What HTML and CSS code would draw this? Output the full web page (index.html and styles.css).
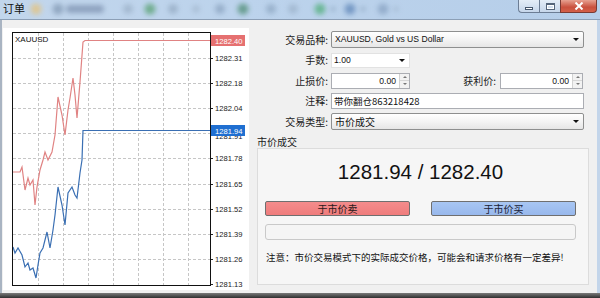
FILE: index.html
```html
<!DOCTYPE html>
<html>
<head>
<meta charset="utf-8">
<title>订单</title>
<link rel="stylesheet" href="styles.css">
</head>
<body>
<div class="window">
  <div class="titlebar">
    <span class="title">订单</span>
    <svg class="toolbar-blur" width="390" height="19" viewBox="22 0 390 19">
      <defs><filter id="b" x="-60%" y="-60%" width="220%" height="220%"><feGaussianBlur stdDeviation="2.4"/></filter></defs>
      <g filter="url(#b)" opacity="0.75">
        <circle cx="33" cy="9" r="5.5" fill="#e6c27a"/>
        <circle cx="55" cy="9" r="5.5" fill="#8299b4"/>
        <rect x="63" y="5" width="38" height="8" rx="4" fill="#7e93b1"/>
        <circle cx="125" cy="9" r="5" fill="#9cb1c8"/>
        <circle cx="147" cy="9" r="5.5" fill="#56a070"/>
        <circle cx="170" cy="9" r="5" fill="#94aac2"/>
        <circle cx="193" cy="9" r="4" fill="#a6bad0"/>
        <circle cx="217" cy="9" r="5" fill="#8aa3bf"/>
        <circle cx="240" cy="9" r="5.5" fill="#4d8c72"/>
        <circle cx="268" cy="9" r="5" fill="#8ea7c2"/>
        <circle cx="290" cy="9" r="5" fill="#9db3cb"/>
        <circle cx="317" cy="9" r="5.5" fill="#4fae78"/>
        <circle cx="330" cy="9" r="2.5" fill="#8ea6c0"/>
        <circle cx="347" cy="9" r="5.5" fill="#5f86b8"/>
        <circle cx="360" cy="9" r="2.5" fill="#8ea6c0"/>
        <circle cx="380" cy="9" r="5.5" fill="#88a2c2"/>
        <circle cx="393" cy="9" r="2.5" fill="#9fb4cc"/>
      </g>
    </svg>
    <div class="caption-buttons">
      <div class="cb cb-min"><span class="min-bar"></span></div>
      <div class="cb cb-max"><span class="max-box"></span></div>
      <div class="cb cb-close">
        <svg width="10" height="8" viewBox="0 0 10 8"><path d="M1.5 0.5 L8.5 7.5 M8.5 0.5 L1.5 7.5" stroke="#fff" stroke-width="2"/></svg>
      </div>
    </div>
  </div>

  <div class="main">
    <div class="chart-panel">
      <svg class="chart" width="246" height="262" viewBox="3 28 246 262">
        <rect x="3" y="28" width="246" height="262" fill="#ffffff"/>
        <g stroke="#c6c6c6" stroke-width="1" stroke-dasharray="3 2">
          <line x1="38.5" y1="33" x2="38.5" y2="285"/>
          <line x1="63.5" y1="33" x2="63.5" y2="285"/>
          <line x1="88.5" y1="33" x2="88.5" y2="285"/>
          <line x1="113.5" y1="33" x2="113.5" y2="285"/>
          <line x1="138.5" y1="33" x2="138.5" y2="285"/>
          <line x1="163.5" y1="33" x2="163.5" y2="285"/>
          <line x1="188.5" y1="33" x2="188.5" y2="285"/>
          <line x1="13" y1="58.5" x2="210" y2="58.5"/>
          <line x1="13" y1="83.5" x2="210" y2="83.5"/>
          <line x1="13" y1="108.5" x2="210" y2="108.5"/>
          <line x1="13" y1="133.5" x2="210" y2="133.5"/>
          <line x1="13" y1="158.5" x2="210" y2="158.5"/>
          <line x1="13" y1="184.5" x2="210" y2="184.5"/>
          <line x1="13" y1="209.5" x2="210" y2="209.5"/>
          <line x1="13" y1="234.5" x2="210" y2="234.5"/>
          <line x1="13" y1="259.5" x2="210" y2="259.5"/>
        </g>
        <g stroke="#222" stroke-width="1">
          <line x1="210" y1="58.5" x2="213" y2="58.5"/>
          <line x1="210" y1="83.5" x2="213" y2="83.5"/>
          <line x1="210" y1="108.5" x2="213" y2="108.5"/>
          <line x1="210" y1="133.5" x2="213" y2="133.5"/>
          <line x1="210" y1="158.5" x2="213" y2="158.5"/>
          <line x1="210" y1="184.5" x2="213" y2="184.5"/>
          <line x1="210" y1="209.5" x2="213" y2="209.5"/>
          <line x1="210" y1="234.5" x2="213" y2="234.5"/>
          <line x1="210" y1="259.5" x2="213" y2="259.5"/>
          <line x1="210" y1="284.5" x2="213" y2="284.5"/>
        </g>
        <polyline fill="none" stroke="#e08383" stroke-width="1.2" points="13,172 20,172 22,167 25,190 28,178 30,185 33,180 35,205 37,187 40,170 43,160 45,152 48,160 52,152 55,135 58,97 62,115 65,135 68,110 70,98 73,78 75,95 77,118 80,82 83,42 85,40.5 210,40.5"/>
        <polyline fill="none" stroke="#3a6fb3" stroke-width="1.2" points="13,247 15,253 18,248 22,255 25,267 28,263 30,270 33,268 36,278 38,265 40,253 43,248 47,232 50,248 53,230 55,215 58,187 62,205 65,225 68,193 72,187 75,195 77,198 80,173 82,160 83,130.5 210,130.5"/>
        <rect x="12.5" y="32.5" width="198" height="253" fill="none" stroke="#111" stroke-width="1"/>
        <text class="sym" x="15" y="42">XAUUSD</text>
        <g class="axis">
          <text x="215" y="61">1282.31</text>
          <text x="215" y="86">1282.18</text>
          <text x="215" y="111">1282.04</text>
          <text x="215" y="139">1281.91</text>
          <text x="215" y="161">1281.78</text>
          <text x="215" y="187">1281.65</text>
          <text x="215" y="212">1281.52</text>
          <text x="215" y="237">1281.39</text>
          <text x="215" y="262">1281.26</text>
          <text x="215" y="287">1281.13</text>
        </g>
        <rect x="211" y="125" width="34" height="11" fill="#1f6fd1"/>
        <text class="tag" x="215" y="133.5">1281.94</text>
        <rect x="211" y="35" width="34" height="11" fill="#e57070"/>
        <text class="tag" x="215" y="43.5">1282.40</text>
      </svg>
    </div>

    <div class="form">
      <div class="rows">
        <div class="row">
          <span class="lbl">交易品种:</span>
          <div class="select wide"><span class="txt">XAUUSD, Gold vs US Dollar</span><span class="arrow"></span></div>
        </div>
        <div class="row">
          <span class="lbl">手数:</span>
          <div class="combo"><span class="txt">1.00</span><span class="arrow"></span></div>
        </div>
        <div class="row">
          <span class="lbl">止损价:</span>
          <div class="spin sl"><span class="val">0.00</span><span class="spin-btns"><span class="up"></span><span class="down"></span></span></div>
          <span class="lbl lbl-tp">获利价:</span>
          <div class="spin tp"><span class="val">0.00</span><span class="spin-btns"><span class="up"></span><span class="down"></span></span></div>
        </div>
        <div class="row">
          <span class="lbl">注释:</span>
          <div class="input wide">带你翻仓863218428</div>
        </div>
        <div class="row">
          <span class="lbl">交易类型:</span>
          <div class="select wide"><span class="txt cjk">市价成交</span><span class="arrow"></span></div>
        </div>
      </div>

      <div class="group-title">市价成交</div>
      <div class="group">
        <div class="price">1281.94 / 1282.40</div>
        <div class="buttons">
          <div class="btn sell">于市价卖</div>
          <div class="btn buy">于市价买</div>
        </div>
        <div class="progress"></div>
        <div class="note">注意：市价交易模式下的实际成交价格，可能会和请求价格有一定差异!</div>
      </div>
    </div>
  </div>
  <div class="bottom-edge"></div>
</div>
</body>
</html>
```

FILE: styles.css
```css
* { box-sizing: border-box; }

body {
  margin: 0;
  width: 600px;
  height: 298px;
  overflow: hidden;
  background: #3a3a3a;
  font-family: "Noto Sans CJK SC", "Liberation Sans", sans-serif;
  color: #111;
}

.window {
  width: 600px;
  height: 298px;
  display: flex;
  flex-direction: column;
}

/* ---------- title bar ---------- */
.titlebar {
  height: 20px;
  flex: none;
  display: flex;
  align-items: flex-start;
  background: linear-gradient(90deg, #c2d6ec, #bcd3ec 40%, #b6cee9);
  border-bottom: 1px solid #8c9fb6;
}

.title {
  font-size: 11px;
  line-height: 17px;
  margin-left: 3px;
  color: #111;
  flex: none;
}

.toolbar-blur {
  flex: none;
  display: block;
}

.caption-buttons {
  margin-left: auto;
  margin-right: 3px;
  display: flex;
  flex: none;
}

.cb {
  height: 13px;
  display: flex;
  align-items: center;
  justify-content: center;
  border: 1px solid #6c7d94;
  border-top: none;
}

.cb-min {
  width: 21px;
  border-right: none;
  border-bottom-left-radius: 4px;
  background: linear-gradient(#e4edf7, #c6d6ea);
}

.cb-max {
  width: 21px;
  border-right: none;
  background: linear-gradient(#e4edf7, #c6d6ea);
}

.cb-close {
  width: 37px;
  border-bottom-right-radius: 4px;
  border-color: #7a3a33;
  background: linear-gradient(#e7a191, #c9503d 60%, #d4604a);
}

.min-bar {
  width: 8px;
  height: 3px;
  margin-top: 4px;
  background: #fff;
  border: 1px solid #47586e;
}

.max-box {
  width: 9px;
  height: 7px;
  border: 1px solid #55657a;
  border-top-width: 2px;
  box-shadow: inset 0 0 0 1px #fff;
}

/* ---------- main area ---------- */
.main {
  height: 273px;
  flex: none;
  display: flex;
  background: #f0f0f0;
  border-left: 2px solid #a9b4c2;
  border-right: 3px solid #c3d5ea;
  padding: 8px 0 0 1px;
}

.chart-panel {
  width: 246px;
  height: 262px;
  flex: none;
}

.chart {
  display: block;
}

.chart .sym {
  font-family: "Liberation Sans", sans-serif;
  font-size: 8px;
  fill: #111;
}

.chart .axis text {
  font-family: "Liberation Sans", sans-serif;
  font-size: 7.6px;
  fill: #222;
}

.chart .tag {
  font-family: "Liberation Sans", sans-serif;
  font-size: 7.6px;
  fill: #fff;
}

/* ---------- form ---------- */
.form {
  flex: 1;
  margin-left: 4px;
  margin-top: 3px;
  display: flex;
  flex-direction: column;
}

.rows {
  display: flex;
  flex-direction: column;
  gap: 3.5px;
}

.row {
  height: 17px;
  display: flex;
  align-items: center;
}

.lbl {
  width: 75px;
  flex: none;
  text-align: right;
  font-size: 10px;
  line-height: 12px;
  margin-right: 3px;
  color: #1a1a1a;
}

.lbl-tp {
  width: 86px;
  margin-right: 4px;
}

.select {
  height: 17px;
  display: flex;
  align-items: center;
  border: 1px solid #8e8f8f;
  border-radius: 2px;
  background: linear-gradient(#ffffff, #f4f4f4 50%, #e6e6e6);
  padding-left: 3px;
}

.wide { width: 253px; }

.txt {
  font-family: "Liberation Sans", sans-serif;
  font-size: 8.6px;
  line-height: 11px;
  color: #111;
}

.txt.cjk {
  font-family: "Noto Sans CJK SC", sans-serif;
  font-size: 10px;
  line-height: 12px;
}

.arrow {
  margin-left: auto;
  margin-right: 4px;
  width: 0;
  height: 0;
  border-left: 3px solid transparent;
  border-right: 3px solid transparent;
  border-top: 3px solid #111;
}

.combo {
  width: 79px;
  height: 15px;
  display: flex;
  align-items: center;
  background: #fff;
  border: 1px solid #e2e2e2;
  padding-left: 2px;
}

.spin {
  height: 16px;
  display: flex;
  align-items: stretch;
  background: #fff;
  border: 1px solid #abadb3;
}

.spin.sl { width: 79px; }
.spin.tp { width: 83px; }

.val {
  flex: 1;
  text-align: right;
  padding-right: 3px;
  font-family: "Liberation Sans", sans-serif;
  font-size: 8.6px;
  line-height: 14px;
}

.spin-btns {
  width: 10px;
  display: flex;
  flex-direction: column;
  border-left: 1px solid #d2d2d2;
  background: #f2f2f2;
}

.spin-btns span {
  flex: 1;
  display: flex;
  align-items: center;
  justify-content: center;
}

.spin-btns .up { border-bottom: 1px solid #d6d6d6; }

.spin-btns .up::before {
  content: "";
  border-left: 2px solid transparent;
  border-right: 2px solid transparent;
  border-bottom: 2px solid #777;
}

.spin-btns .down::before {
  content: "";
  border-left: 2px solid transparent;
  border-right: 2px solid transparent;
  border-top: 2px solid #777;
}

.input {
  height: 16px;
  background: #fff;
  border: 1px solid #abadb3;
  padding-left: 2px;
  font-size: 9.5px;
  line-height: 14px;
  color: #111;
}

/* ---------- group ---------- */
.group-title {
  margin: 6px 0 0 4px;
  font-size: 10px;
  line-height: 12px;
  color: #1a1a1a;
}

.group {
  margin-left: 4px;
  width: 332px;
  height: 137px;
  border: 1px solid #dcdcdc;
  background: #f6f6f6;
  padding: 11px 12px 0 7px;
}

.price {
  height: 24px;
  font-family: "Liberation Sans", sans-serif;
  font-size: 20.5px;
  line-height: 24px;
  text-align: center;
  color: #111;
}

.buttons {
  margin-top: 17px;
  display: flex;
  justify-content: space-between;
}

.btn {
  width: 145px;
  height: 15px;
  border: 1px solid #6f6f6f;
  border-radius: 2px;
  font-size: 10px;
  line-height: 13px;
  text-align: center;
  color: #2a1a1a;
}

.sell { background: linear-gradient(#f48c8c, #ef7c7c); }
.buy { background: linear-gradient(#a8c6f3, #98b8ec); color: #1a2236; }

.progress {
  margin-top: 8px;
  height: 16px;
  border: 1px solid #c9c9c9;
  border-radius: 3px;
  background: #f5f5f5;
}

.note {
  margin-top: 11px;
  padding-left: 1px;
  font-size: 9.5px;
  line-height: 12px;
  color: #111;
  white-space: nowrap;
}

.bottom-edge {
  height: 5px;
  flex: none;
  background: linear-gradient(#7a7a7a, #2f2f2f);
}
```
